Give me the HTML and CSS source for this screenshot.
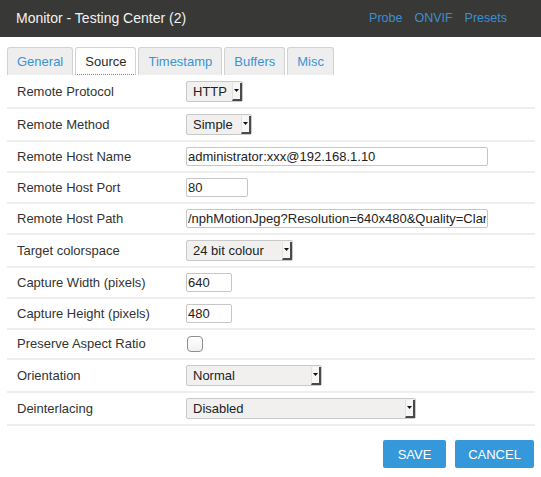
FILE: index.html
```html
<!DOCTYPE html>
<html>
<head>
<meta charset="utf-8">
<link rel="stylesheet" href="styles.css">
</head>
<body>
<header class="topbar">
  <div class="title">Monitor - Testing Center (2)</div>
  <nav class="links">
    <a>Probe</a>
    <a>ONVIF</a>
    <a>Presets</a>
  </nav>
</header>
<main class="content">
  <div class="tabs">
    <div class="tab">General</div>
    <div class="tab active">Source</div>
    <div class="tab">Timestamp</div>
    <div class="tab">Buffers</div>
    <div class="tab">Misc</div>
  </div>
  <div class="form">
    <div class="row first">
      <div class="label">Remote Protocol</div>
      <div><span class="sel w-http"><span class="txt">HTTP</span><span class="arr"><svg width="5" height="3" viewBox="0 0 5 3"><polygon points="0,0 5,0 2.5,3" fill="#111"/></svg></span></span></div>
    </div>
    <div class="row">
      <div class="label">Remote Method</div>
      <div><span class="sel w-simple"><span class="txt">Simple</span><span class="arr"><svg width="5" height="3" viewBox="0 0 5 3"><polygon points="0,0 5,0 2.5,3" fill="#111"/></svg></span></span></div>
    </div>
    <div class="row">
      <div class="label">Remote Host Name</div>
      <div><input class="inp w-long" type="text" value="administrator:xxx@192.168.1.10"></div>
    </div>
    <div class="row">
      <div class="label">Remote Host Port</div>
      <div><input class="inp w-port" type="text" value="80"></div>
    </div>
    <div class="row">
      <div class="label">Remote Host Path</div>
      <div><input class="inp w-long" type="text" value="/nphMotionJpeg?Resolution=640x480&amp;Quality=Clarity"></div>
    </div>
    <div class="row">
      <div class="label">Target colorspace</div>
      <div><span class="sel w-colour"><span class="txt">24 bit colour</span><span class="arr"><svg width="5" height="3" viewBox="0 0 5 3"><polygon points="0,0 5,0 2.5,3" fill="#111"/></svg></span></span></div>
    </div>
    <div class="row">
      <div class="label">Capture Width (pixels)</div>
      <div><input class="inp w-dim" type="text" value="640"></div>
    </div>
    <div class="row">
      <div class="label">Capture Height (pixels)</div>
      <div><input class="inp w-dim" type="text" value="480"></div>
    </div>
    <div class="row">
      <div class="label">Preserve Aspect Ratio</div>
      <div class="chkcell"><span class="chk"></span></div>
    </div>
    <div class="row">
      <div class="label">Orientation</div>
      <div><span class="sel w-normal"><span class="txt">Normal</span><span class="arr"><svg width="5" height="3" viewBox="0 0 5 3"><polygon points="0,0 5,0 2.5,3" fill="#111"/></svg></span></span></div>
    </div>
    <div class="row">
      <div class="label">Deinterlacing</div>
      <div><span class="sel w-disabled"><span class="txt">Disabled</span><span class="arr"><svg width="5" height="3" viewBox="0 0 5 3"><polygon points="0,0 5,0 2.5,3" fill="#111"/></svg></span></span></div>
    </div>
  </div>
  <div class="actions">
    <button class="btn w-save">SAVE</button>
    <button class="btn w-cancel">CANCEL</button>
  </div>
</main>
</body>
</html>
```
FILE: styles.css
```css
* { box-sizing: border-box; }
html, body {
  margin: 0;
  padding: 0;
  background: #ffffff;
  font-family: "Liberation Sans", Arial, sans-serif;
  color: #333333;
}
.topbar {
  height: 37px;
  background: #383836;
  display: flex;
  align-items: center;
  justify-content: space-between;
  padding: 0 34px 0 16px;
}
.title {
  color: #f2f2f2;
  font-size: 14px;
  margin-top: -2px;
}
.links {
  display: flex;
  gap: 12px;
  margin-top: -2px;
}
.links a {
  color: #3c8fd0;
  font-size: 12.5px;
  text-decoration: none;
}
.content {
  padding: 0 6px 0 7px;
}
.tabs {
  display: flex;
  gap: 2px;
  margin-top: 10px;
  height: 28px;
}
.tab {
  height: 28px;
  padding: 0 9px;
  border: 1px solid #d2d2d2;
  border-bottom: none;
  border-radius: 3px 3px 0 0;
  background: #eeeeee;
  color: #3b93d5;
  font-size: 13px;
  line-height: 27px;
}
.tab.active {
  background: #ffffff;
  color: #2b2b2b;
  border-bottom: 1px dotted #8a8a8a;
}
.form {
  display: flex;
  flex-direction: column;
}
.row {
  display: grid;
  grid-template-columns: 179px 1fr;
  align-items: center;
  padding: 5px 0;
  border-bottom: 2px solid #eeeeee;
}
.row.first {
  padding-top: 6px;
}
.label {
  padding-left: 10px;
  font-size: 13px;
  line-height: 18px;
  color: #333333;
}
.sel {
  display: flex;
  align-items: stretch;
  justify-content: space-between;
  height: 21px;
  border: 1px solid #c9c9c9;
  border-radius: 2px;
  background: #f1f0ef;
  font-size: 13px;
  color: #222222;
}
.sel .txt {
  padding-left: 6px;
  line-height: 19px;
  white-space: nowrap;
}
.sel .arr {
  width: 10px;
  margin-top: 1px;
  background: #f7f7f7;
  border-left: 1px solid #e2e2e2;
  border-right: 2px solid #4a4a4a;
  border-bottom: 2px solid #4a4a4a;
  display: flex;
  justify-content: center;
  align-items: flex-start;
  padding-top: 6px;
}
.sel .arr svg { display: block; }
.w-http { width: 57px; }
.w-simple { width: 66px; }
.w-colour { width: 107px; }
.w-normal { width: 136px; }
.w-disabled { width: 230px; }
.inp {
  display: block;
  height: 19px;
  margin: 0;
  padding: 0 1px;
  border: 1px solid #c6c6c6;
  border-radius: 2px;
  background: #ffffff;
  font-family: "Liberation Sans", Arial, sans-serif;
  font-size: 13px;
  color: #222222;
  outline: none;
}
.w-long { width: 302px; }
.w-port { width: 62px; }
.w-dim { width: 46px; }
.chkcell {
  display: flex;
  align-items: center;
  height: 18px;
}
.chk {
  display: block;
  width: 16px;
  height: 16px;
  margin-left: 1px;
  border: 1px solid #8e8e8e;
  border-radius: 4px;
  background: linear-gradient(#ffffff, #f0f0f0);
}
.actions {
  display: flex;
  justify-content: flex-end;
  gap: 9px;
  margin-top: 14px;
  padding-right: 1px;
}
.btn {
  height: 28px;
  border: none;
  border-radius: 2px;
  background: #3498db;
  color: #ffffff;
  font-family: "Liberation Sans", Arial, sans-serif;
  font-size: 13px;
  padding: 0;
}
.w-save { width: 63px; }
.w-cancel { width: 79px; }
```
